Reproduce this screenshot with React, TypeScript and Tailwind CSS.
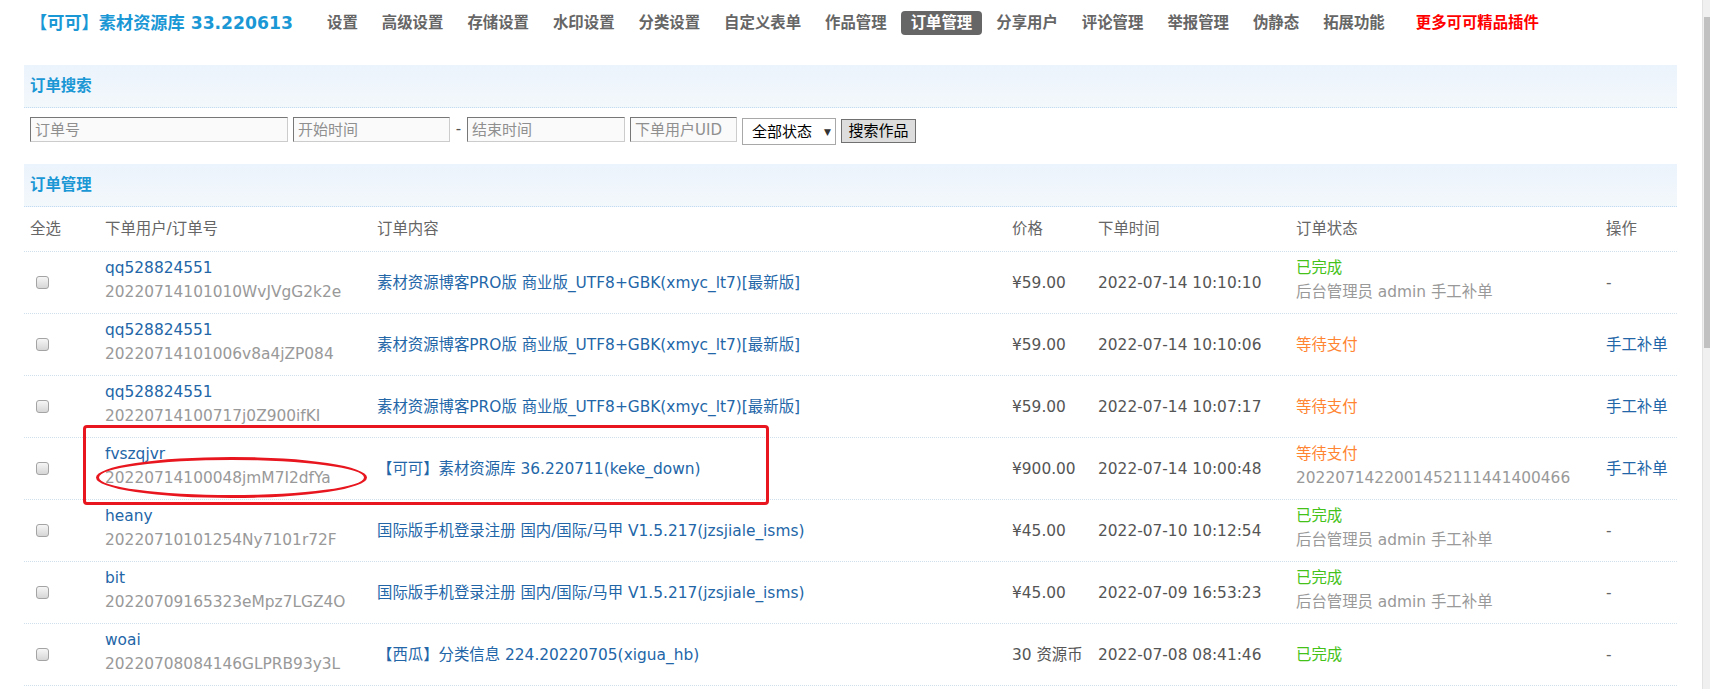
import React from "react";

type Row = {
  user: string;
  no: string;
  content: string;
  price: string;
  time: string;
  status: "done" | "wait";
  sub?: string;
  op: string;
};

const A = "素材资源博客PRO版 商业版_UTF8+GBK(xmyc_lt7)[最新版]";
const B = "国际版手机登录注册 国内/国际/马甲 V1.5.217(jzsjiale_isms)";
const ADMIN = "后台管理员 admin 手工补单";

const rows: Row[] = [
  { user: "qq528824551", no: "20220714101010WvJVgG2k2e", content: A, price: "¥59.00", time: "2022-07-14 10:10:10", status: "done", sub: ADMIN, op: "-" },
  { user: "qq528824551", no: "20220714101006v8a4jZP084", content: A, price: "¥59.00", time: "2022-07-14 10:10:06", status: "wait", op: "手工补单" },
  { user: "qq528824551", no: "20220714100717j0Z900ifKI", content: A, price: "¥59.00", time: "2022-07-14 10:07:17", status: "wait", op: "手工补单" },
  { user: "fvszqjvr", no: "20220714100048jmM7I2dfYa", content: "【可可】素材资源库 36.220711(keke_down)", price: "¥900.00", time: "2022-07-14 10:00:48", status: "wait", sub: "2022071422001452111441400466", op: "手工补单" },
  { user: "heany", no: "20220710101254Ny7101r72F", content: B, price: "¥45.00", time: "2022-07-10 10:12:54", status: "done", sub: ADMIN, op: "-" },
  { user: "bit", no: "20220709165323eMpz7LGZ4O", content: B, price: "¥45.00", time: "2022-07-09 16:53:23", status: "done", sub: ADMIN, op: "-" },
  { user: "woai", no: "20220708084146GLPRB93y3L", content: "【西瓜】分类信息 224.20220705(xigua_hb)", price: "30 资源币", time: "2022-07-08 08:41:46", status: "done", op: "-" },
];

const navs = ["设置", "高级设置", "存储设置", "水印设置", "分类设置", "自定义表单", "作品管理", "订单管理", "分享用户", "评论管理", "举报管理", "伪静态", "拓展功能"];

function Checkbox() {
  return (
    <span className="inline-block w-[13px] h-[13px] rounded-[3px] border border-[#a4a4a4] bg-gradient-to-b from-[#f6f6f6] to-[#d6d6d6]" />
  );
}

function PanelHeader({ title }: { title: string }) {
  return (
    <div className="h-[43px] flex items-center pl-[6px] bg-gradient-to-b from-[#ebf3fc] to-[#f3f8fb] border-b border-dotted border-[#c3dcef]">
      <span className="font-bold text-[#1a97d5]">{title}</span>
    </div>
  );
}

const GRID = "grid grid-cols-[75px_272px_635px_86px_198px_310px_77px]";

export default function App() {
  return (
    <div className="relative flex h-[689px] overflow-hidden bg-white text-[15.4px] leading-[24px] font-[family-name:'DejaVu_Sans','Noto_Sans_CJK_SC',sans-serif]">
      <div className="w-[1702px] pl-[24px] pr-[25px]">
        {/* top nav */}
        <div className="flex items-center h-[45px] pl-[6px]">
          <div className="w-[287px] text-[17.2px] font-bold text-[#1a97d5] whitespace-nowrap">【可可】素材资源库 33.220613</div>
          <nav className="flex items-center gap-[4px] whitespace-nowrap">
            {navs.map((n) =>
              n === "订单管理" ? (
                <span key={n} className="px-[10px] h-[24px] leading-[24px] rounded-[4px] bg-[#666666] text-white font-bold">
                  {n}
                </span>
              ) : (
                <span key={n} className="px-[10px] h-[24px] leading-[24px] text-[#666666] font-bold">
                  {n}
                </span>
              )
            )}
            <span className="ml-[7px] px-[10px] h-[24px] leading-[24px] text-[#ff0000] font-bold">更多可可精品插件</span>
          </nav>
        </div>

        <div className="mt-[20px]">
          <PanelHeader title="订单搜索" />
          <div className="h-[56px] pt-[9px] px-[6px] flex items-start gap-[5px] text-[15px]">
            <input placeholder="订单号" className="w-[258px] h-[25px] pl-[4px] bg-[#fafafa] border border-t-[#777] border-l-[#777] border-r-[#cccccc] border-b-[#cccccc] placeholder:text-[#8f8f8f] outline-none" />
            <input placeholder="开始时间" className="w-[157px] h-[25px] pl-[4px] bg-[#fafafa] border border-t-[#777] border-l-[#777] border-r-[#cccccc] border-b-[#cccccc] placeholder:text-[#8f8f8f] outline-none" />
            <span className="w-[7px] h-[25px] leading-[25px] text-center text-[#555]">-</span>
            <input placeholder="结束时间" className="w-[158px] h-[25px] pl-[4px] bg-[#fafafa] border border-t-[#777] border-l-[#777] border-r-[#cccccc] border-b-[#cccccc] placeholder:text-[#8f8f8f] outline-none" />
            <input placeholder="下单用户UID" className="w-[107px] h-[25px] pl-[4px] bg-[#fafafa] border border-t-[#777] border-l-[#777] border-r-[#cccccc] border-b-[#cccccc] placeholder:text-[#8f8f8f] outline-none" />
            <div className="mt-[1px] w-[94px] h-[27px] flex items-center pl-[9px] pr-[4px] bg-white border border-[#a8a8a8] text-black">
              <span>全部状态</span>
              <span className="ml-auto text-[9px] text-[#333]">▼</span>
            </div>
            <div className="mt-[2px] w-[75px] h-[24px] flex items-center justify-center bg-[#dddddd] border border-[#707070] text-black">
              搜索作品
            </div>
          </div>

          <PanelHeader title="订单管理" />

          <div className={`${GRID} h-[45px] border-b border-dotted border-[#cfdfec] text-[#666666]`}>
            <div className="flex items-center pl-[6px]">全选</div>
            <div className="flex items-center pl-[6px]">下单用户/订单号</div>
            <div className="flex items-center pl-[6px]">订单内容</div>
            <div className="flex items-center pl-[6px]">价格</div>
            <div className="flex items-center pl-[6px]">下单时间</div>
            <div className="flex items-center pl-[6px]">订单状态</div>
            <div className="flex items-center pl-[6px]">操作</div>
          </div>

          {rows.map((r, i) => (
            <div key={i} className={`${GRID} h-[62px] border-b border-dotted border-[#cfdfec]`}>
              <div className="flex items-center pl-[12px]">
                <Checkbox />
              </div>
              <div className="flex flex-col justify-center pl-[6px] pb-[6px] whitespace-nowrap">
                <span className="text-[#2366a8]">{r.user}</span>
                <span className="text-[#999999]">{r.no}</span>
              </div>
              <div className="flex items-center pl-[6px] text-[#2366a8] whitespace-nowrap">{r.content}</div>
              <div className="flex items-center pl-[6px] text-[#555555] whitespace-nowrap">{r.price}</div>
              <div className="flex items-center pl-[6px] text-[#555555] whitespace-nowrap">{r.time}</div>
              <div className={`flex flex-col justify-center pl-[6px] whitespace-nowrap ${r.sub ? "pb-[6px]" : ""}`}>
                <span className={r.status === "done" ? "text-[#45c21a]" : "text-[#ff8533]"}>
                  {r.status === "done" ? "已完成" : "等待支付"}
                </span>
                {r.sub && <span className="text-[#999999]">{r.sub}</span>}
              </div>
              <div className={`flex items-center pl-[6px] whitespace-nowrap ${r.op === "-" ? "text-[#666666]" : "text-[#2366a8]"}`}>
                {r.op}
              </div>
            </div>
          ))}
        </div>
      </div>

      {/* scrollbar */}
      <div className="w-[8px] h-full bg-[#f0f0f0] border-l border-[#e2e2e2]">
        <div className="mt-[17px] ml-[1px] w-[6px] h-[331px] bg-[#c1c1c1]" />
      </div>

      {/* red annotations */}
      <div className="absolute left-[83px] top-[425px] w-[686px] h-[80px] border-[3px] border-[#e8161e] rounded-[4px] pointer-events-none" />
      <div className="absolute left-[96px] top-[457px] w-[271px] h-[41px] border-[3px] border-[#e8161e] rounded-[50%] pointer-events-none" />
    </div>
  );
}
